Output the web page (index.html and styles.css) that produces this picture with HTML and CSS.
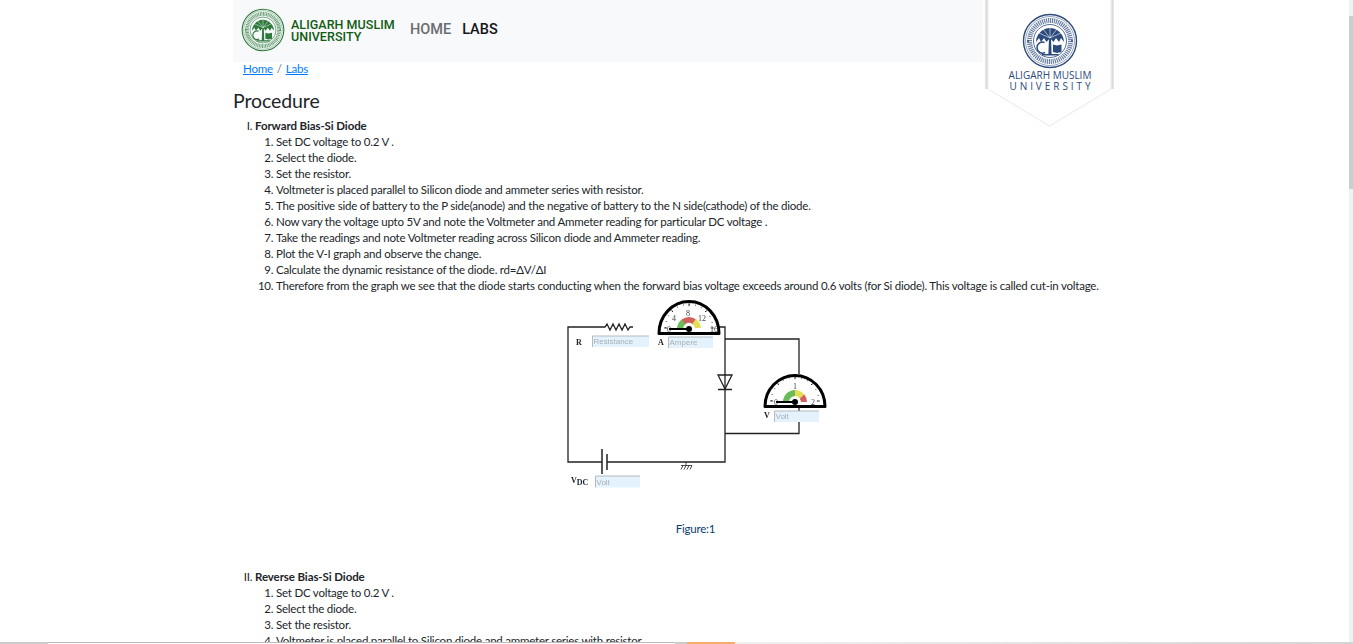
FILE: index.html
```html
<!DOCTYPE html>
<html lang="en">
<head>
<meta charset="utf-8">
<title>Procedure</title>
<link rel="stylesheet" href="styles.css">
</head>
<body>
<svg class="defs" width="0" height="0" aria-hidden="true">
  <defs>
    <g id="seal">
      <circle r="26.5" fill="none" stroke="currentColor" stroke-width="1.4"/>
      <circle r="24.5" fill="none" stroke="currentColor" stroke-width="0.5"/>
      <circle r="20.5" fill="none" stroke="currentColor" stroke-width="5" stroke-dasharray="1.2 .8" opacity="0.7"/>
      <circle r="16.5" fill="none" stroke="currentColor" stroke-width="0.8"/>
      <path fill="currentColor" d="M-1-3-1.600 13H-8V14.600H8.500V13H1.600L1-3Z"/>
      <path fill="currentColor" d="M-14 1C-14-7-7-13 0-13 7-13 14-7 14 1L11-3 9 1 6-3 3.500 1 0-3-3.500 1-6-3-9 1-11-3Z"/>
      <path fill="none" stroke="#fff" stroke-width=".6" d="M0-3-7-12M0-3-11-8M0-3 7-12M0-3 11-8M0-3V-13"/>
      <path fill="none" stroke="currentColor" stroke-width="1.500" d="M-5.500 1.500A5.500 5.500 0 1 0-5 11.500"/>
      <path fill="currentColor" d="M3 3.500 7 4.500 11.500 3.500V11L7 12 3 11Z"/>
      <circle cx="-22" r="1" fill="currentColor"/>
      <circle cx="22" r="1" fill="currentColor"/>
    </g>
    <g id="dial-ticks" fill="none" stroke="#222" stroke-width="1">
      <path d="M-26 0h3M23 0h3M0-26v3M-18.400-18.400l1.500 1.500M18.400-18.400l-1.500 1.500"/>
      <path stroke-dasharray="1 5.500" d="M-25 0A25 25 0 0 1 25 0"/>
    </g>
  </defs>
</svg>

<div class="page">
  <header class="topbar">
    <nav class="navbar">
      <svg class="nav-seal" viewBox="-28 -28 56 56"><use href="#seal"/></svg>
      <div class="brand"><span>ALIGARH MUSLIM</span><span>UNIVERSITY</span></div>
      <a class="nav-link" href="#">HOME</a>
      <a class="nav-link active" href="#">LABS</a>
    </nav>
    <div class="crest">
      <svg class="crest-bg" viewBox="0 0 132 128" aria-hidden="true">
        <path class="crest-sides" d="M2.500 0V89M128.500 0V89"/>
        <path class="crest-shape" d="M4-2H127V89L65.500 126 4 89Z"/>
      </svg>
      <div class="crest-body">
        <svg class="crest-seal" viewBox="-28 -28 56 56"><use href="#seal"/></svg>
        <div class="crest-name">ALIGARH MUSLIM</div>
        <div class="crest-sub">UNIVERSITY</div>
      </div>
    </div>
  </header>

  <div class="crumbs"><a href="#">Home</a><span class="sep">/</span><a href="#">Labs</a></div>
  <h4 class="title">Procedure</h4>

  <ol class="steps">
    <li>
      <b>Forward Bias-Si Diode</b>
      <ol>
        <li>Set DC voltage to 0.2 V .</li>
        <li>Select the diode.</li>
        <li>Set the resistor.</li>
        <li>Voltmeter is placed parallel to Silicon diode and ammeter series with resistor.</li>
        <li>The positive side of battery to the P side(anode) and the negative of battery to the N side(cathode) of the diode.</li>
        <li>Now vary the voltage upto 5V and note the Voltmeter and Ammeter reading for particular DC voltage .</li>
        <li>Take the readings and note Voltmeter reading across Silicon diode and Ammeter reading.</li>
        <li>Plot the V-I graph and observe the change.</li>
        <li>Calculate the dynamic resistance of the diode. rd=ΔV/ΔI</li>
        <li>Therefore from the graph we see that the diode starts conducting when the forward bias voltage exceeds around 0.6 volts (for Si diode). This voltage is called cut-in voltage.</li>
      </ol>
      <figure class="figure">
        <svg class="circuit" viewBox="555 294 281 200">
          <g class="wire">
            <path d="M603 327H568V462H602M607 462H725V327H720M725 339H799V374M725 433.500H799V408"/>
            <path d="M603 327l2 0 2-3 3 6 3-6 3 6 3-6 3 6 3-6 3 6 2-3h3"/>
            <path class="plate" d="M602 449V474M607 454V470"/>
            <path d="M718 375H732L725 389ZM718 389.500H732"/>
            <path class="thin" d="M686 462V465.500M681 465.500H692M683 465.500l-2 4M686 465.500l-2 4M689 465.500l-2 4M692 465.500l-2 4"/>
          </g>

          <g transform="translate(689 329)">
            <path class="dome" d="M-30 4.500A30 32 0 0 1 30 4.500Z"/>
            <use href="#dial-ticks" transform="translate(0 -1) scale(.95)"/>
            <path class="band green" d="M-9 0A9 9 0 0 1-5-7.500"/>
            <path class="band red" d="M-5.500-7.200A9 9 0 0 1 5.500-7.200"/>
            <path class="band yellow" d="M5-7.500A9 9 0 0 1 9-1"/>
            <text class="num" x="-20" y="2.500">0</text>
            <text class="num" x="-15" y="-8">4</text>
            <text class="num" x="-1" y="-13">8</text>
            <text class="num" x="13" y="-8">12</text>
            <text class="num" x="25" y="2.500">16</text>
            <path class="needle" d="M-20 0H0"/>
            <circle r="3" fill="#000"/>
          </g>

          <g transform="translate(795 402)">
            <path class="dome" d="M-30 4.500A30 31 0 0 1 30 4.500Z"/>
            <use href="#dial-ticks" transform="translate(0 -1) scale(.95)"/>
            <path class="band green" d="M-9 0A9 9 0 0 1 0-9"/>
            <path class="band yellow" d="M0-9A9 9 0 0 1 7-5.500"/>
            <path class="band red" d="M7-5.500A9 9 0 0 1 9 0"/>
            <text class="num" x="-19" y="2.500">0</text>
            <text class="num" x="0" y="-13">1</text>
            <text class="num" x="18" y="2.500">2</text>
            <path class="needle" d="M-19 0H0"/>
            <circle r="3" fill="#000"/>
          </g>

          <g>
            <text class="lbl" x="579" y="345">R</text>
            <rect class="field" x="592.500" y="336" width="56.500" height="11"/>
            <path class="field-edge" d="M592.500 347V336H649"/>
            <text class="hint" x="593.500" y="344">Resistance</text>
            <text class="lbl" x="661" y="345">A</text>
            <rect class="field" x="668.500" y="337" width="44.500" height="11"/>
            <path class="field-edge" d="M668.500 348V337H713"/>
            <text class="hint" x="669.500" y="345">Ampere</text>
            <text class="lbl" x="767" y="418">V</text>
            <rect class="field" x="774.500" y="411" width="44.500" height="11"/>
            <path class="field-edge" d="M774.500 422V411H819"/>
            <text class="hint" x="775.500" y="419">Volt</text>
            <text class="lbl lbl-start" x="571" y="483">V<tspan dy="2">DC</tspan></text>
            <rect class="field" x="595.500" y="476" width="44.500" height="11.500"/>
            <path class="field-edge" d="M595.500 487.500V476H640"/>
            <text class="hint" x="596.500" y="485">Volt</text>
          </g>
        </svg>
        <figcaption>Figure:1</figcaption>
      </figure>
    </li>
    <li>
      <b>Reverse Bias-Si Diode</b>
      <ol>
        <li>Set DC voltage to 0.2 V .</li>
        <li>Select the diode.</li>
        <li>Set the resistor.</li>
        <li>Voltmeter is placed parallel to Silicon diode and ammeter series with resistor.</li>
      </ol>
    </li>
  </ol>
</div>

<div class="vbar"><div class="vthumb"></div></div>
<div class="hbar">
  <span class="seg-a"></span><span class="seg-b"></span><span class="seg-c"></span><span class="seg-d"></span><span class="seg-e"></span>
</div>
</body>
</html>
```
FILE: styles.css
```css
* { box-sizing: border-box; }
html, body { margin: 0; height: 100%; overflow: hidden; background: #fff; }
body { font-family: Lato, "Open Sans", sans-serif; font-size: 11.500px; letter-spacing: -.22px; line-height: 16px; color: #212529; }
b { letter-spacing: -.1px; }
.defs { position: absolute; }

.page { width: 880px; margin-left: 233px; }

.topbar { position: relative; height: 62px; }
.navbar { width: 750px; height: 62px; background: #f8f9fa; display: flex; align-items: center; padding-left: 8px; }
.nav-seal { width: 44px; height: 44px; color: #2e7a3c; flex: none; margin-top: -2px; }
.brand { width: 119px; display: flex; flex-direction: column; margin-left: 6px; margin-top: -1px; font-family: Roboto, sans-serif; font-weight: 500; font-size: 12.500px; line-height: 11.500px; color: #115c14; letter-spacing: .05px; }
.nav-link { font-family: Roboto, sans-serif; font-weight: 500; font-size: 14.500px; letter-spacing: 0; color: #6b6b70; text-decoration: none; margin-right: 11px; margin-top: -2px; }
.nav-link.active { color: #14141a; }

.crest { position: absolute; left: 751px; top: 0; width: 132px; height: 128px; letter-spacing: 0; }
.crest-bg { position: absolute; inset: 0; width: 132px; height: 128px; }
.crest-sides { fill: none; stroke: #dcdcdc; stroke-width: 2.500; }
.crest-shape { fill: #fff; stroke: #e9e9e9; stroke-width: 1; }
.crest-body { position: relative; display: flex; flex-direction: column; align-items: center; padding-top: 13px; }
.crest-seal { width: 56px; height: 56px; color: #2c4a7c; }
.crest-name { font-family: "Open Sans", sans-serif; font-size: 10px; line-height: 11px; color: #2c4a7c; margin-top: 1px; }
.crest-sub { font-family: "Open Sans", sans-serif; font-size: 10px; line-height: 11px; color: #2c4a7c; letter-spacing: 2.950px; margin-left: 3px; }

.crumbs { padding-left: 10px; height: 16px; margin-top: -1px; }
.crumbs a { color: #007bff; }
.sep { margin: 0 4px; color: #6c757d; }

.title { font-size: 19.500px; letter-spacing: -.1px; line-height: 24px; font-weight: 400; margin: 12px 0 0; }

.steps { list-style: upper-roman; margin: 5px 0 0; padding-left: 22px; }
.steps > li + li { margin-top: 32px; }
.steps ol { list-style: decimal; margin: 0; padding-left: 21px; }

.figure { margin: 0; padding-left: 23px; text-align: center; }
.circuit { display: block; width: 281px; height: 200px; margin: 0 auto; filter: blur(.3px); }
.figure figcaption { color: #0a3d6b; margin-top: 27px; }

.wire path { fill: none; stroke: #222; stroke-width: 1.300; }
.wire .plate { stroke-width: 1.500; }
.wire .thin { stroke-width: .8; }
.dome { fill: #fff; stroke: #000; stroke-width: 3; stroke-linejoin: round; }
.band { fill: none; stroke-width: 6; }
.green { stroke: #6cbb5a; }
.red { stroke: #d2605d; }
.yellow { stroke: #e4de52; }
.needle { fill: none; stroke: #000; stroke-width: 2; }
.num { font-family: "Liberation Serif", serif; font-size: 8px; letter-spacing: 0; fill: #444; text-anchor: middle; }
.lbl { font-family: "Liberation Serif", serif; font-weight: 700; font-size: 8px; letter-spacing: 0; fill: #222; text-anchor: middle; }
.lbl-start { text-anchor: start; }
.lbl tspan { font-size: 8px; fill: #123; }
.field { fill: #e3f2fd; stroke: none; }
.field-edge { fill: none; stroke: #b5b9bd; stroke-width: 1; }
.hint { font-family: "Liberation Sans", sans-serif; font-size: 8px; letter-spacing: 0; fill: #aab0b6; }

.vbar { position: fixed; right: 0; top: 0; width: 4px; height: 644px; background: #f1f1f1; padding-top: 16px; }
.vthumb { height: 173px; background: #ccc; }

.hbar { position: fixed; left: 0; right: 0; bottom: 0; height: 2px; display: flex; }
.seg-a { width: 48px; background: #ccc; }
.seg-b { width: 627px; background: #fff; border-top: 1px solid #bbb; }
.seg-c { width: 12px; background: #ccc; }
.seg-d { width: 48px; background: #f5ab6c; }
.seg-e { flex: 1; background: linear-gradient(90deg, #f1f1f1, #d4d4d4); }
```
